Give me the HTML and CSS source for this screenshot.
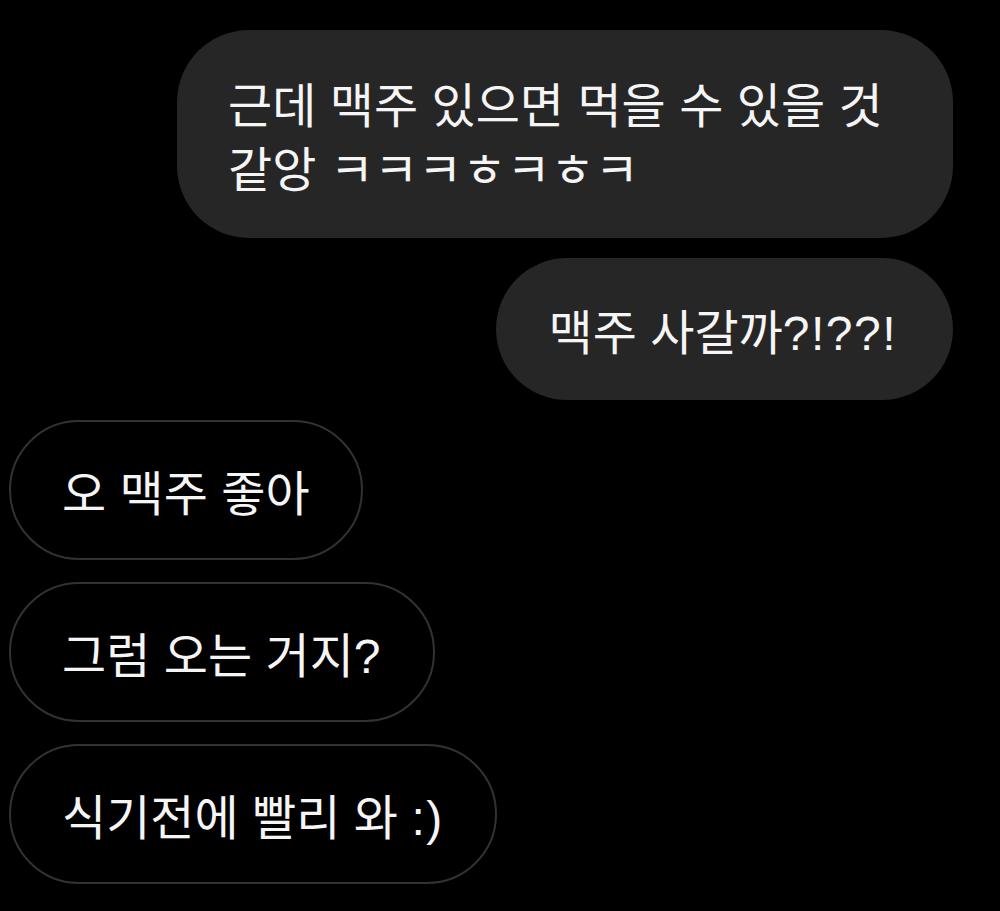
FILE: index.html
```html
<!DOCTYPE html>
<html lang="ko">
<head>
<meta charset="utf-8">
<title>Chat</title>
<link rel="stylesheet" href="styles.css">
</head>
<body>
<main class="chat">
  <div class="msg sent wide">근데 맥주 있으면 먹을 수 있을 것 같앙 ㅋㅋㅋㅎㅋㅎㅋ</div>
  <div class="msg sent">맥주 사갈까<span class="punct">?!??!</span></div>
  <div class="msg recv">오 맥주 좋아</div>
  <div class="msg recv">그럼 오는 거지<span class="punct">?</span></div>
  <div class="msg recv">식기전에 빨리 와 <span class="punct">:)</span></div>
</main>
</body>
</html>
```
FILE: styles.css
```css
html, body {
  margin: 0;
  background: #000;
  height: 100%;
}
.chat {
  display: flex;
  flex-direction: column;
  gap: 20px;
  padding: 30px 47px 0 9px;
  font-family: "Noto Sans CJK KR", "Noto Sans", sans-serif;
  font-size: 48px;
  line-height: 64px;
  color: #f5f5f5;
}
.msg {
  box-sizing: border-box;
  border-radius: 72px;
  padding: 39px 56px 39px 52px;
  max-width: 776px;
  word-break: keep-all;
}
.punct {
  font-family: "Liberation Sans", sans-serif;
  font-size: 48px;
  letter-spacing: 1.5px;
  line-height: 0;
}
.sent {
  align-self: flex-end;
  background: #262626;
}
.wide {
  padding: 40px 51px;
  width: 776px;
}
.recv {
  align-self: flex-start;
  background: #000;
  border: 2px solid #323232;
  padding: 36px 51px;
}
.recv + .recv {
  margin-top: 2px;
}
```
